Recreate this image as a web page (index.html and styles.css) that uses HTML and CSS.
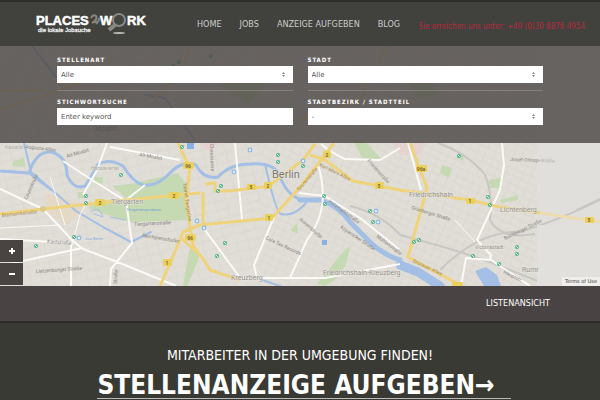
FILE: index.html
```html
<!DOCTYPE html>
<html lang="de">
<head>
<meta charset="utf-8">
<meta name="viewport" content="width=device-width, initial-scale=1">
<title>Places2Work – die lokale Jobsuche</title>
<link rel="stylesheet" href="styles.css">
</head>
<body>
<header class="header">
  <a class="logo" href="#" aria-label="Places2Work">
    <svg viewBox="0 0 114 24" width="114" height="24">
      <text x="0" y="13" class="logo-word">PLACES</text>
      <path d="M55 6Q57 2 60 4Q62 7 56 11Q59 9 61 11Q63 9 63 6" class="logo-two"/>
      <text x="64" y="13" class="logo-word">W</text>
      <path d="M79 13L73 18" class="handle"/>
      <circle cx="83" cy="8" r="6" class="lens"/>
      <ellipse cx="83" cy="21" rx="6" ry="1" fill="#b9b9b6"/>
      <text x="91" y="13" class="logo-word">RK</text>
      <text x="2" y="20" class="logo-tag">die lokale Jobsuche</text>
    </svg>
  </a>
  <nav class="nav">
    <a href="#">HOME</a>
    <a href="#">JOBS</a>
    <a href="#">ANZEIGE AUFGEBEN</a>
    <a href="#">BLOG</a>
  </nav>
  <p class="phone">Sie erreichen uns unter: +49 (0)30 8876 4954</p>
</header>

<main>
  <section class="map-area">
    <svg class="map" viewBox="0 46 600 240" preserveAspectRatio="xMidYMid slice" role="img" aria-label="Karte von Berlin">
      <defs>
        <pattern id="streets" width="22" height="18" patternUnits="userSpaceOnUse" patternTransform="rotate(-14)">
          <path d="M0 5H22M0 14H22M6 0V18M17 0V14" stroke="#d5d2cc" stroke-width=".6"/>
        </pattern>
        <pattern id="streets-east" width="17" height="15" patternUnits="userSpaceOnUse" patternTransform="rotate(24)">
          <path d="M0 5H17M0 12H17M5 0V15M13 0V12" stroke="#d5d2cc" stroke-width=".6"/>
        </pattern>
        <g id="station"><circle r="2" fill="#4fb38b"/><path d="M-1 -1L1 1" stroke="#dff3e9" stroke-width="1"/></g>
        <g id="rail-stop"><circle r="2.4" fill="#8fb8e4"/><circle r="1.2" fill="#e5eef8"/></g>
      </defs>
      <rect y="46" width="600" height="240" fill="#e1ded8"/>
      <rect y="46" width="260" height="240" fill="url(#streets)"/>
      <rect x="260" y="46" width="277" height="240" fill="url(#streets-east)"/>
      <path d="M537 46H600V286H537Z" fill="#e0dfdc"/>

      <g fill="#c5d9b2">
        <path d="M112 186L130 184L178 173L186 184L187 220L130 222L108 215L88 208L98 201L126 198Z"/>
        <path d="M353 140L368 144L382 160L362 158Z"/>
        <path d="M489 180L502 178V188L490 188Z"/>
        <path d="M442 165L452 168L449 178L440 173Z"/>
        <path d="M500 200L518 195V200L502 203Z"/>
        <path d="M343 252L350 246L346 265L335 280L325 286L317 284Z"/>
        <path d="M190 247L200 255L192 275L187 286L183 286Z"/>
        <path d="M290 230L297 223L298 234Z"/>
        <path d="M458 154L464 154L463 161L457 158Z"/>
        <path d="M94 177H103V183H94ZM78 192H84V198H78ZM13 161L24 158L25 167L12 166Z"/>
        <path d="M222 86L240 68L266 84L248 105ZM407 80L430 75L438 95L417 99Z"/>
      </g>
      <path d="M45 193L86 205L68 225L48 215Z" fill="#e4d9c6"/>
      <path d="M391 143H425L420 155H400ZM200 143H220L208 151Z" fill="#e6d3cf"/>
      <path d="M577 210L600 199M440 270Q480 230 520 232Q560 220 600 200M400 235Q450 248 490 262L550 286M438 143Q470 155 485 175Q493 194 490 220Q500 240 535 234M350 206Q382 214 400 235" fill="none" stroke="#c8c7c3" stroke-width="2"/>

      <g fill="none" stroke="#a3bfe6" stroke-linecap="round" stroke-linejoin="round">
        <path stroke-width="3" d="M0 171L29 173Q36 151 51 152Q67 156 67 175Q73 190 85 186Q93 174 98 164Q110 158 123 166Q133 182 143 185Q157 187 170 173Q182 160 196 165Q204 180 218 177Q230 164 250 164Q275 162 280 177Q289 199 305 200"/>
        <path stroke-width="2" d="M24 143L31 172L59 196L76 211L103 227L131 242L151 232M30 174L51 190M265 164Q276 213 281 214Q294 217 306 203M262 280L280 286"/>
        <path stroke-width="5" d="M300 200L321 200Q340 207 351 223L373 245Q388 257 400 260"/>
        <path stroke-width="9" d="M400 265L418 272L440 286"/>
        <path stroke-width="1" d="M90 212Q100 205 103 217L94 214M110 217L125 220"/>
        <path stroke-width="2" d="M32 46L60 82M145 95L165 98L195 140"/>
      </g>
      <path d="M475 271L486 267L497 275L501 286H484Z" fill="#a3bfe6"/>

      <g fill="none" stroke="#fbfaf7" stroke-width="2" stroke-linejoin="round">
        <path d="M0 189L43 209L73 241L83 249L120 263L176 286M0 239L72 243M0 266L82 248M71 243V286M63 161L92 180L126 201L132 243L111 269L110 286M107 143L97 170L83 195M110 147L180 160M126 200L145 185"/>
        <path d="M235 143L242 220M205 230L241 279L265 278H325L400 264M274 217L254 265L257 279M317 163Q322 173 323 196Q322 220 307 240L290 278M299 193L325 196L360 218L400 250M321 144Q330 152 345 159L380 160L400 148"/>
        <path d="M502 143L504 165L500 190L477 240L491 255L490 260L466 258L461 286M491 260L530 286M408 143L421 190"/>
        <path stroke-width="1" d="M0 228L60 225M50 177L65 225M72 245L80 215L88 200M455 220L475 242"/>
      </g>
      <g fill="none" stroke-linejoin="round">
        <path d="M0 214L43 209L126 200L200 193M178 143L185 158L190 168L186 200L190 226L193 245L200 256M200 225L183 232L180 240L160 286M182 239L201 256L210 270L240 280M205 184L215 183V191H230L269 186L303 160L315 144M200 225L272 218L302 185L334 143M310 155L325 160L353 181L400 190L470 200L495 206L540 213M410 143L427 188L408 257L462 286M203 192V224" stroke="#efd37a" stroke-width="3"/>
        <path d="M540 213L600 222" stroke="#ecdcae" stroke-width="3"/>
        <path d="M0 110L55 92L100 75M155 98L180 72L190 48M300 120L360 100L387 46M0 91L45 90" stroke="#edd58b" stroke-width="2"/>
      </g>
      <path d="M537 225H600V286H537Z" fill="#e1e0dd"/>

      <g fill="#ecd05c">
        <rect x="95" y="199" width="10" height="7" rx="1"/><rect x="169" y="192" width="10" height="7" rx="1"/>
        <rect x="183" y="162" width="11" height="7" rx="2"/><rect x="185" y="234" width="11" height="7" rx="2"/>
        <rect x="163" y="259" width="9" height="7" rx="1"/><rect x="247" y="184" width="9" height="6" rx="1"/>
        <rect x="264" y="182" width="8" height="7" rx="1"/><rect x="265" y="214" width="8" height="7" rx="1"/>
        <rect x="323" y="151" width="8" height="7" rx="1"/><rect x="375" y="182" width="9" height="7" rx="1"/>
        <rect x="416" y="165" width="11" height="7" rx="1"/><rect x="466" y="198" width="9" height="6" rx="1"/>
        <rect x="585" y="217" width="9" height="6" rx="1"/><rect x="452" y="282" width="11" height="6" rx="1"/>
      </g>
      <g class="shield">
        <text x="100" y="205">2</text><text x="174" y="198">2</text><text x="188" y="168">96</text><text x="190" y="240">96</text>
        <text x="167" y="265">1</text><text x="251" y="189">5</text><text x="268" y="188">2</text><text x="269" y="220">1</text>
        <text x="327" y="157">2</text><text x="379" y="188">5</text><text x="421" y="171">96a</text><text x="470" y="203">1</text><text x="589" y="222">5</text>
      </g>
      <g>
        <use href="#station" x="86" y="196"/><use href="#station" x="86" y="203"/><use href="#station" x="121" y="175"/>
        <use href="#station" x="182" y="147"/><use href="#station" x="74" y="237"/><use href="#station" x="36" y="246"/>
        <use href="#station" x="221" y="186"/><use href="#station" x="218" y="191"/><use href="#station" x="278" y="155"/>
        <use href="#station" x="278" y="162"/><use href="#station" x="303" y="166"/><use href="#station" x="324" y="196"/>
        <use href="#station" x="325" y="204"/><use href="#station" x="370" y="211"/><use href="#station" x="373" y="222"/>
        <use href="#station" x="225" y="243"/><use href="#station" x="217" y="256"/><use href="#station" x="459" y="156"/>
        <use href="#station" x="488" y="197"/><use href="#station" x="490" y="205"/><use href="#station" x="414" y="242"/>
        <use href="#station" x="419" y="240"/><use href="#station" x="473" y="256"/><use href="#station" x="499" y="264"/>
        <use href="#station" x="517" y="247"/><use href="#station" x="517" y="254"/>
        <use href="#station" x="173" y="66"/><use href="#station" x="179" y="62"/><use href="#station" x="211" y="56"/>
        <use href="#rail-stop" x="79" y="238"/><use href="#rail-stop" x="250" y="150"/><use href="#rail-stop" x="234" y="172"/>
        <use href="#rail-stop" x="303" y="161"/><use href="#rail-stop" x="376" y="211"/><use href="#rail-stop" x="378" y="222"/>
        <use href="#rail-stop" x="204" y="228"/><use href="#rail-stop" x="197" y="221"/>
        <circle cx="43" cy="209" r="3" fill="#dcc98c"/>
        <rect x="187" y="143" width="7" height="6" fill="#8bb0e4"/><rect x="322" y="240" width="5" height="5" fill="#8bb0e4"/>
      </g>

      <g class="street">
        <text x="5" y="149" opacity=".5">Kaiserin</text>
        <text transform="translate(25 148) rotate(7)">Augusta-Allee</text>
        <text transform="translate(67 158) rotate(-17)">Alt-Moabit</text>
        <text transform="translate(139 156) rotate(10)">Alt-Moabit</text>
        <text transform="translate(27 200) rotate(-66)">Cauerstraße</text>
        <text class="brown" transform="translate(2 217) rotate(-6)">Bismarckstraße</text>
        <text transform="translate(134 226) rotate(-3)">Tiergartenstraße</text>
        <text class="water" transform="translate(126 211)">Tiergartengewässer</text>
        <text transform="translate(142 237) rotate(9)">Reichpietschufer</text>
        <text transform="translate(47 243) rotate(4)">Kantstraße</text>
        <text transform="translate(36 273) rotate(-4)">Lietzenburger Straße</text>
        <text class="brown" transform="translate(183 183) rotate(82)">Tunnel Tiergarten</text>
        <text transform="translate(117 284) rotate(-88)">Straße</text>
        <text transform="translate(210 144) rotate(88)">Chausseestr.</text>
        <text transform="translate(265 239) rotate(25)">Core Tex Records</text>
        <text transform="translate(299 220) rotate(41)">Annenstraße</text>
        <text transform="translate(328 202) rotate(36)">Holzmarktstraße</text>
        <text transform="translate(340 228) rotate(34)">Köpenicker Straße</text>
        <text transform="translate(376 237) rotate(37)">Mühlenstraße</text>
        <text class="brown" transform="translate(319 166) rotate(26)">Karl-Marx-Allee</text>
        <text class="brown" transform="translate(299 191) rotate(-49)">Grunerstraße</text>
        <text transform="translate(367 161) rotate(48)">Friedenstraße</text>
        <text transform="translate(411 209) rotate(17)">Grünberger Straße</text>
        <text transform="translate(505 240) rotate(-26)">Buchberger Straße</text>
        <text transform="translate(510 161) rotate(2)">Josef-Orlopp-<tspan opacity=".5">Straße</tspan></text>
        <text class="brown" transform="translate(412 262) rotate(25)">Stralauer Allee</text>
        <text transform="translate(503 273) rotate(27)">Hauptstr.</text>
      </g>
      <g class="place">
        <text x="91" y="170" opacity=".7">Hansaviertel</text>
        <text x="111" y="204" class="mid">Tiergarten</text>
        <text x="85" y="240" class="water">Zoo Berlin</text>
        <text x="272" y="178" class="city">Berlin</text>
        <text x="231" y="280" class="mid">Kreuzberg</text>
        <text x="323" y="275" class="mid">Friedrichshain-Kreuzberg</text>
        <text x="409" y="197" class="mid">Friedrichshain</text>
        <text x="500" y="212" class="mid">Lichtenberg</text>
        <text x="475" y="249">Victoriastadt</text>
        <text x="522" y="272" class="mid">Rumr</text>
        <text x="95" y="131" class="mid">Moabit</text>
      </g>
    </svg>

    <form class="search">
      <div class="field ruled">
        <label for="type">STELLENART</label>
        <div class="picker"><select id="type"><option>Alle</option></select><svg viewBox="0 0 3 5" width="3" height="5"><path d="M0 2L1.5 0L3 2ZM0 3L1.5 5L3 3Z"/></svg></div>
      </div>
      <div class="field ruled">
        <label for="city">STADT</label>
        <div class="picker"><select id="city"><option>Alle</option></select><svg viewBox="0 0 3 5" width="3" height="5"><path d="M0 2L1.5 0L3 2ZM0 3L1.5 5L3 3Z"/></svg></div>
      </div>
      <div class="field">
        <label for="keyword">STICHWORTSUCHE</label>
        <input id="keyword" type="text" placeholder="Enter keyword">
      </div>
      <div class="field">
        <label for="district">STADTBEZIRK / STADTTEIL</label>
        <div class="picker"><select id="district"><option>-</option></select><svg viewBox="0 0 3 5" width="3" height="5"><path d="M0 2L1.5 0L3 2ZM0 3L1.5 5L3 3Z"/></svg></div>
      </div>
    </form>

    <div class="map-foot">
      <div class="zoom">
        <button type="button" aria-label="Vergrößern"><svg viewBox="0 0 6 6" width="6" height="6"><path d="M3 0V6M0 3H6"/></svg></button>
        <button type="button" aria-label="Verkleinern"><svg viewBox="0 0 6 6" width="6" height="6"><path d="M0 3H6"/></svg></button>
      </div>
      <a class="terms" href="#">Terms of Use</a>
    </div>
  </section>

  <div class="viewbar"><a href="#">LISTENANSICHT</a></div>

  <section class="promo">
    <p>MITARBEITER IN DER UMGEBUNG FINDEN!</p>
    <h1><a href="#">STELLENANZEIGE AUFGEBEN→</a></h1>
  </section>
</main>
</body>
</html>
```
FILE: styles.css
```css
* { box-sizing: border-box; }

body {
  margin: 0;
  background: #3a3a35;
  color: #fff;
  font-family: "DejaVu Sans Condensed", "DejaVu Sans", sans-serif;
}

a { color: inherit; text-decoration: none; }
p, h1 { margin: 0; }

.header {
  display: flex;
  align-items: center;
  min-height: 46px;
  padding: 0 15px 0 36px;
  border-top: 2px solid #2c2c2a;
  background: #41413e;
  white-space: nowrap;
}

.logo { display: flex; }
.logo-word { font: bold 13px "Liberation Sans", sans-serif; fill: #fff; stroke: #fff; stroke-width: .5; }
.logo-tag { font: 6px "Liberation Sans", sans-serif; fill: #eee; stroke: #eee; stroke-width: .3; }
.logo-two { fill: none; stroke: #858582; stroke-width: 2; }
.lens { fill: #444441; stroke: #898986; stroke-width: 2; }
.handle { stroke: #898986; stroke-width: 4; }

.nav {
  display: flex;
  gap: 18px;
  margin-left: 47px;
  font-size: 9px;
  line-height: 12px;
  color: #ccccca;
}

.phone {
  margin-left: auto;
  padding-top: 6px;
  font-size: 8px;
  line-height: 12px;
  color: #b92a3d;
}

.map-area {
  position: relative;
  display: flex;
  flex-direction: column;
  justify-content: space-between;
  min-height: 240px;
  overflow: hidden;
}

.map { position: absolute; inset: 0; width: 100%; height: 100%; }
.map text { font-family: Roboto, sans-serif; }
.street { font-size: 5px; fill: #8a8680; }
.street .brown { fill: #a68b5c; }
.map .water { fill: #7aa1d6; font-size: 4px; }
.shield { font-size: 5px; font-weight: bold; fill: #7c6a2c; text-anchor: middle; }
.place { font-size: 5px; fill: #96928c; stroke: #e8e5df; stroke-width: 1px; paint-order: stroke; }
.place .mid { font-size: 7px; }
.place .city { font-size: 11px; fill: #7d7973; }

.search {
  position: relative;
  display: grid;
  grid-template-columns: 1fr 1fr;
  column-gap: 15px;
  row-gap: 7px;
  padding: 10px 57px 18px;
  background: rgba(73, 68, 66, .8);
}

.field label {
  display: block;
  font-size: 6px;
  font-weight: bold;
  letter-spacing: 1px;
  line-height: 8px;
  margin-bottom: 2px;
}

.ruled { padding-bottom: 7px; border-bottom: 1px solid #85807d; }

.picker { position: relative; display: flex; }
.picker svg { position: absolute; right: 8px; top: 6px; fill: #888; }

.field select,
.field input {
  appearance: none;
  display: block;
  width: 100%;
  height: 17px;
  margin: 0;
  padding: 0 4px;
  border: 0;
  border-radius: 0;
  background: #fff;
  color: #555;
  font: 7px "DejaVu Sans", sans-serif;
}

.field input::placeholder { color: #555; opacity: 1; }

.map-foot {
  position: relative;
  display: flex;
  justify-content: space-between;
  align-items: flex-end;
}

.zoom { display: grid; gap: 1px; padding-bottom: 1px; }
.zoom button {
  display: flex;
  align-items: center;
  justify-content: center;
  width: 23px;
  height: 22px;
  padding: 0;
  border: 0;
  background: #494442;
}
.zoom path { stroke: #fff; stroke-width: 2; }

.terms {
  padding: 0 3px;
  background: #efeeec;
  color: #333;
  font: 5px/9px "DejaVu Sans", sans-serif;
}

.viewbar {
  display: flex;
  justify-content: flex-end;
  padding: 11px 50px 12px 0;
  border-bottom: 2px solid #2c2a28;
  background: #494443;
  font-size: 9px;
  line-height: 12px;
}

.promo { padding-top: 22px; text-align: center; }
.promo p { font-size: 14px; line-height: 20px; }
.promo h1 { margin-top: 8px; padding-left: 8px; font-size: 26px; line-height: 25px; }
.promo h1 a { display: inline-block; padding-right: 16px; border-bottom: 1px solid #bbb; }
```
